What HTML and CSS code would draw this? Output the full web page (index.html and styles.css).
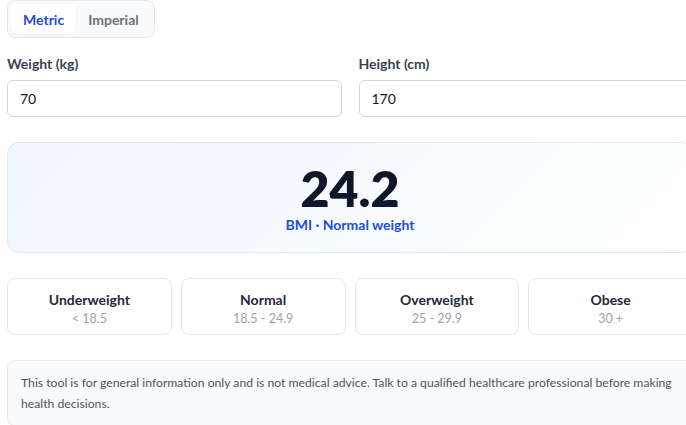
FILE: index.html
```html
<!DOCTYPE html>
<html lang="en">
<head>
    <meta charset="UTF-8">
    <meta name="viewport" content="width=device-width, initial-scale=1.0">
    <title>BMI Calculator</title>
    <link rel="stylesheet" href="styles.css">
</head>
<body>
    <div class="app">
        <div class="unit-switch">
            <button class="active">Metric</button>
            <button>Imperial</button>
        </div>

        <div class="fields">
            <div class="field">
                <label for="weight">Weight (kg)</label>
                <input type="text" id="weight" value="70">
            </div>
            <div class="field">
                <label for="height">Height (cm)</label>
                <input type="text" id="height" value="170">
            </div>
        </div>

        <div class="result">
            <div class="result-value">24.2</div>
            <div class="result-label">BMI · Normal weight</div>
        </div>

        <div class="ranges">
            <div class="range">
                <div class="range-name">Underweight</div>
                <div class="range-value">&lt; 18.5</div>
            </div>
            <div class="range">
                <div class="range-name">Normal</div>
                <div class="range-value">18.5 - 24.9</div>
            </div>
            <div class="range">
                <div class="range-name">Overweight</div>
                <div class="range-value">25 - 29.9</div>
            </div>
            <div class="range">
                <div class="range-name">Obese</div>
                <div class="range-value">30 +</div>
            </div>
        </div>

        <div class="note">
            This tool is for general information only and is not medical advice. Talk to a qualified healthcare professional before making health decisions.
        </div>
    </div>
</body>
</html>
```

FILE: styles.css
```css
body {
    margin: 0;
    overflow: hidden;
    font-family: Lato, "Noto Sans", sans-serif;
    color: #1f2937;
    background: #ffffff;
}

.app {
    width: 686px;
    margin-left: 7px;
}

.unit-switch {
    display: inline-flex;
    padding: 3px;
    background-color: #f8fafc;
    border: 1px solid #e5e7eb;
    border-radius: 8px;
}

.unit-switch button {
    font-family: inherit;
    font-size: 14px;
    font-weight: 700;
    color: #6b7280;
    background: none;
    border: none;
    border-radius: 6px;
    padding: 0 12px;
    height: 30px;
    cursor: pointer;
}

.unit-switch button.active {
    background-color: #ffffff;
    color: #1d4ed8;
    box-shadow: 0 1px 2px rgba(15, 23, 42, 0.06);
}

.fields {
    display: grid;
    grid-template-columns: 1fr 1fr;
    gap: 17px;
    margin-top: 17px;
}

.field label {
    display: block;
    font-size: 14px;
    font-weight: 700;
    color: #374151;
    margin-bottom: 8px;
}

.field input {
    box-sizing: border-box;
    width: 100%;
    height: 37px;
    padding: 0 12px;
    font-family: inherit;
    font-size: 14px;
    color: #111827;
    border: 1px solid #d1d5db;
    border-radius: 6px;
    outline: none;
}

.result {
    margin-top: 25px;
    height: 111px;
    box-sizing: border-box;
    padding-top: 17px;
    text-align: center;
    border: 1px solid #dbeafe;
    border-radius: 12px;
    background: linear-gradient(135deg, #eff6ff, #ffffff);
}

.result-value {
    font-size: 50px;
    font-weight: 800;
    line-height: 56px;
    color: #0f172a;
}

.result-label {
    font-size: 14px;
    font-weight: 700;
    color: #1d4ed8;
}

.ranges {
    display: grid;
    grid-template-columns: repeat(4, 1fr);
    gap: 9px;
    margin-top: 25px;
}

.range {
    height: 57px;
    box-sizing: border-box;
    padding-top: 12px;
    text-align: center;
    border: 1px solid #e5e7eb;
    border-radius: 8px;
}

.range-name {
    font-size: 14px;
    font-weight: 700;
    color: #1f2937;
}

.range-value {
    font-size: 12.5px;
    color: #9ca3af;
    margin-top: 3px;
}

.note {
    margin-top: 25px;
    padding: 11px 13px;
    font-size: 12.2px;
    line-height: 21px;
    color: #4b5563;
    background-color: #f8fafc;
    border: 1px solid #e5e7eb;
    border-radius: 8px;
}
```
